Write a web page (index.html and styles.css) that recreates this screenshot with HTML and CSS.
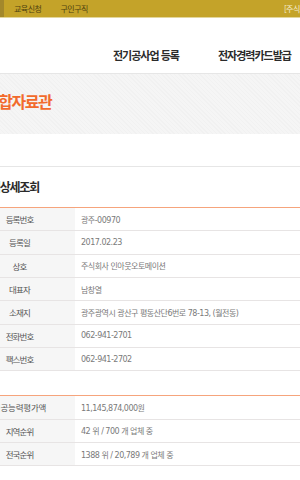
FILE: index.html
```html
<!DOCTYPE html>
<html lang="ko">
<head>
<meta charset="utf-8">
<title>업체상세조회</title>
<link rel="stylesheet" href="styles.css">
</head>
<body>
<div class="topbar">
  <span class="topbar-edge"></span>
  <a class="top-link">교육신청</a>
  <a class="top-link">구인구직</a>
  <span class="top-right">[주식회사 인아웃오토메이션]</span>
</div>
<nav class="nav">
  <a class="nav-item">전기공사업 등록</a>
  <a class="nav-item">전자경력카드발급</a>
</nav>
<div class="band">
  <h1 class="band-title">종합자료관</h1>
</div>
<section class="detail">
  <h2 class="detail-title">업체상세조회</h2>
  <div class="info">
    <div class="row"><div class="label">등록번호</div><div class="value">광주-00970</div></div>
    <div class="row"><div class="label">등록일</div><div class="value">2017.02.23</div></div>
    <div class="row"><div class="label">상호</div><div class="value">주식회사 인아웃오토메이션</div></div>
    <div class="row"><div class="label">대표자</div><div class="value">남창열</div></div>
    <div class="row"><div class="label">소재지</div><div class="value">광주광역시 광산구 평동산단6번로 78-13, (월전동)</div></div>
    <div class="row"><div class="label">전화번호</div><div class="value">062-941-2701</div></div>
    <div class="row"><div class="label">팩스번호</div><div class="value">062-941-2702</div></div>
  </div>
  <div class="info info-rank">
    <div class="row"><div class="label label-wide">시공능력평가액</div><div class="value">11,145,874,000원</div></div>
    <div class="row"><div class="label">지역순위</div><div class="value">42 위 / 700 개 업체 중</div></div>
    <div class="row"><div class="label">전국순위</div><div class="value">1388 위 / 20,789 개 업체 중</div></div>
  </div>
</section>
</body>
</html>
```

FILE: styles.css
```css
html, body {
  margin: 0;
  padding: 0;
  overflow: hidden;
  background: #ffffff;
}
body {
  width: 300px;
  font-family: "Noto Sans CJK KR", "Noto Sans", sans-serif;
  color: #333;
}
a { text-decoration: none; }

.topbar {
  height: 17px;
  background: #c4a329;
  border-bottom: 1px solid #e3d69c;
  display: flex;
  align-items: center;
  white-space: nowrap;
  font-size: 8px;
  letter-spacing: -0.5px;
  line-height: 17px;
}
.topbar-edge {
  width: 4px;
  height: 17px;
  background: #a3882b;
  flex: none;
}
.top-link {
  color: #4f4210;
  margin-left: 10px;
  margin-right: 19px;
  flex: none;
}
.top-link + .top-link { margin-left: 0; margin-right: 0; }
.top-right {
  margin-left: 196px;
  color: #f6eecf;
  flex: none;
}

.nav {
  height: 55px;
  box-sizing: border-box;
  padding: 30px 0 0 113px;
  display: flex;
  gap: 39px;
  white-space: nowrap;
}
.nav-item {
  font-size: 11px;
  font-weight: 700;
  letter-spacing: -1px;
  line-height: 14px;
  color: #2b2b2b;
  flex: none;
}

.band {
  height: 61px;
  box-sizing: border-box;
  border-top: 1px solid #e6e6e6;
  background-color: #f3f3f3;
  background-image: repeating-linear-gradient(45deg, #f1f1f1 0 1px, #f5f5f5 1px 3px);
  padding-top: 17px;
}
.band-title {
  margin: 0 0 0 -36px;
  padding-left: 21px;
  font-size: 16px;
  font-weight: 700;
  letter-spacing: -1.5px;
  line-height: 20px;
  color: #f26a2c;
  white-space: nowrap;
}

.detail {
  margin-top: 32px;
  border-top: 1px solid #e6e6e6;
  padding-top: 12px;
}
.detail-title {
  margin: 0 0 12px -36px;
  padding-left: 16px;
  font-size: 12px;
  font-weight: 700;
  letter-spacing: -1.2px;
  line-height: 16px;
  color: #2a2a2a;
  white-space: nowrap;
}

.info {
  margin-left: -36px;
  width: 360px;
  border-top: 1px solid #f6a47c;
}
.info-rank { margin-top: 24px; }
.row {
  display: grid;
  grid-template-columns: 111px 1fr;
  height: 23.33px;
  box-sizing: border-box;
  border-bottom: 1px solid #e7e4e4;
  white-space: nowrap;
}
.label {
  background: #f6f6f6;
  text-align: center;
  font-size: 8.5px;
  letter-spacing: -0.9px;
  color: #555;
  display: flex;
  align-items: center;
  justify-content: center;
}
.label-wide { letter-spacing: -0.2px; }
.value {
  padding-left: 6px;
  font-family: "DejaVu Sans", "Noto Sans CJK KR", sans-serif;
  font-size: 8px;
  letter-spacing: -0.5px;
  color: #7a7a7a;
  display: flex;
  align-items: center;
}
```
